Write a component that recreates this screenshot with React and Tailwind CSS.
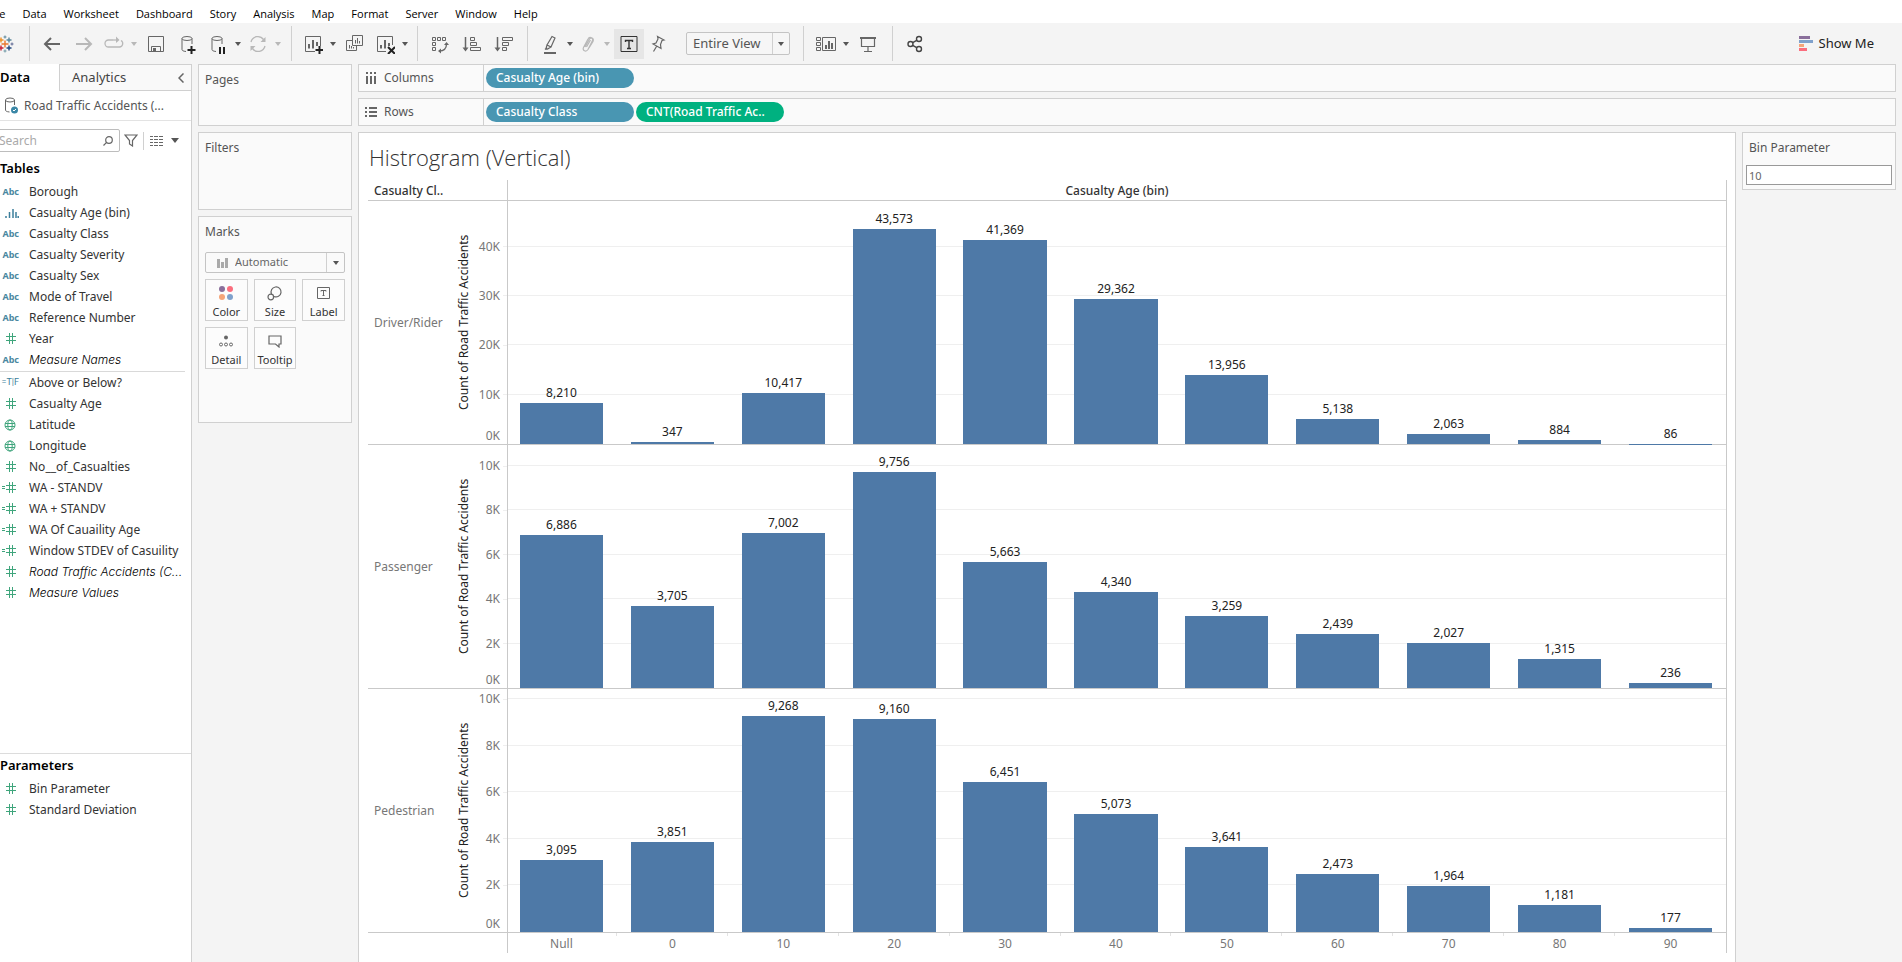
import React, { useState } from "react";

const MENUS = [
  "File",
  "Data",
  "Worksheet",
  "Dashboard",
  "Story",
  "Analysis",
  "Map",
  "Format",
  "Server",
  "Window",
  "Help",
];

const DIMENSIONS = [
  { name: "Borough", type: "abc" },
  { name: "Casualty Age (bin)", type: "bin" },
  { name: "Casualty Class", type: "abc" },
  { name: "Casualty Severity", type: "abc" },
  { name: "Casualty Sex", type: "abc" },
  { name: "Mode of Travel", type: "abc" },
  { name: "Reference Number", type: "abc" },
  { name: "Year", type: "number" },
  { name: "Measure Names", type: "abc", generated: true },
];

const MEASURES = [
  { name: "Above or Below?", type: "bool" },
  { name: "Casualty Age", type: "number" },
  { name: "Latitude", type: "geo" },
  { name: "Longitude", type: "geo" },
  { name: "No__of_Casualties", type: "number" },
  { name: "WA - STANDV", type: "calc" },
  { name: "WA + STANDV", type: "calc" },
  { name: "WA Of Cauaility Age", type: "calc" },
  { name: "Window STDEV of Casuility", type: "calc" },
  { name: "Road Traffic Accidents (C...", type: "number", generated: true },
  { name: "Measure Values", type: "number", generated: true },
];

const PARAMETERS = [
  { name: "Bin Parameter", type: "number" },
  { name: "Standard Deviation", type: "number" },
];

const BINS = ["Null", "0", "10", "20", "30", "40", "50", "60", "70", "80", "90"];

const PANES = [
  {
    name: "Driver/Rider",
    max: 49220,
    step: 10000,
    values: [8210, 347, 10417, 43573, 41369, 29362, 13956, 5138, 2063, 884, 86],
  },
  {
    name: "Passenger",
    max: 10950,
    step: 2000,
    values: [6886, 3705, 7002, 9756, 5663, 4340, 3259, 2439, 2027, 1315, 236],
  },
  {
    name: "Pedestrian",
    max: 10430,
    step: 2000,
    values: [3095, 3851, 9268, 9160, 6451, 5073, 3641, 2473, 1964, 1181, 177],
  },
];

//////////////////////////
// Icons

const Svg = ({ w = 20, h = 20, children, ...rest }) => (
  <svg
    width={w}
    height={h}
    viewBox={`0 0 ${w} ${h}`}
    fill="none"
    stroke="#666"
    aria-hidden="true"
    className="shrink-0"
    {...rest}
  >
    {children}
  </svg>
);

const LogoIcon = () => (
  <Svg strokeWidth="1.4">
    <path d="M10 6.5v7M6.5 10h7" stroke="#e8762d" />
    <path d="M14 3.5v5M11.5 6h5" stroke="#5b879b" />
    <path d="M6 3.5v5M3.5 6h5" stroke="#eb9129" />
    <path d="M14 11.5v5M11.5 14h5" stroke="#1f457e" />
    <path d="M6 11.5v5M3.5 14h5" stroke="#c72035" />
    <path d="M10 1.5v3M8.5 3h3" stroke="#5b879b" strokeWidth="1" />
    <path d="M10 15.5v3M8.5 17h3" stroke="#7099a6" strokeWidth="1" />
    <path d="M17 8.5v3M15.5 10h3" stroke="#5c6692" strokeWidth="1" />
  </Svg>
);

const BackIcon = () => (
  <Svg strokeWidth="2">
    <path d="M18 10H3M9 4l-6 6 6 6" />
  </Svg>
);

const ForwardIcon = () => (
  <Svg strokeWidth="2" stroke="#b8b8b8">
    <path d="M2 10h15M11 4l6 6-6 6" />
  </Svg>
);

const ReplayIcon = () => (
  <Svg stroke="#b8b8b8" strokeWidth="1.3">
    <path d="M9 6H4.5a3.5 3.5 0 0 0 0 7h11A3.5 3.5 0 0 0 17 6.5" />
    <path d="M9 6h4" />
    <path d="M12 2.5L15.5 6 12 9z" fill="#b8b8b8" stroke="none" />
  </Svg>
);

const SaveIcon = () => (
  <Svg>
    <path d="M2.5 2.5h15v15h-15zM5.5 17.5v-5h9v5" />
    <path d="M7 14h3v3H7z" fill="#666" stroke="none" />
  </Svg>
);

const DatabaseShape = () => (
  <>
    <ellipse cx="9" cy="4.5" rx="5" ry="2" />
    <path d="M4 4.5v11c0 1 1 1.7 4 2M14 4.5V10" />
  </>
);

const AddDataIcon = () => (
  <Svg>
    <DatabaseShape />
    <path d="M13.5 12v8M9.5 16h8" stroke="#222" strokeWidth="2" />
  </Svg>
);

const PauseDataIcon = () => (
  <Svg>
    <DatabaseShape />
    <path d="M12 13v7M16 13v7" stroke="#222" strokeWidth="2" />
  </Svg>
);

const RefreshIcon = () => (
  <Svg stroke="#b8b8b8" strokeWidth="1.3">
    <path d="M3 8a7 7 0 0 1 12.5-2.5M17 12A7 7 0 0 1 4.5 14.5" />
    <path d="M17.5 3v5h-5zM2.5 17v-5h5z" fill="#b8b8b8" stroke="none" />
  </Svg>
);

const NewSheetIcon = () => (
  <Svg>
    <path d="M12 17.5H2.5v-15h15V12" />
    <path d="M6 10v4.5M10 6v8.5M14 8v4" strokeWidth="2" />
    <path d="M16.5 12v8M12.5 16h8" stroke="#222" strokeWidth="2" />
  </Svg>
);

const DuplicateIcon = () => (
  <Svg>
    <path d="M7.5 1.5h10v10h-10zM7.5 6.5h-6v10h10v-5" />
    <path d="M10.5 6v3.5M12.5 4v5.5M14.5 7v2.5M4.5 11v3.5M6.5 12v2.5M8.5 13v1.5" />
  </Svg>
);

const ClearSheetIcon = () => (
  <Svg>
    <path d="M11 17.5H2.5v-15h15V11" />
    <path d="M6 11v3.5M10 6v8.5M14 9v3" strokeWidth="2" />
    <path d="M13 13l7 7M20 13l-7 7" stroke="#222" strokeWidth="2" />
  </Svg>
);

const SwapIcon = () => (
  <Svg>
    <path d="M2.5 3.5h3v3h-3zM7.5 3.5h3v3h-3zM12.5 3.5h3v3h-3zM2.5 8.5h3v3h-3zM2.5 13.5h3v3h-3z" />
    <path d="M9 17c5 0 7.5-3 7.5-7" strokeWidth="1.3" />
    <path d="M14 11l2.5-3 2.5 3zM11 14.5L8 17l3 2.5z" fill="#666" stroke="none" />
  </Svg>
);

const SortAscIcon = () => (
  <Svg>
    <path d="M3.5 3v12" strokeWidth="1.5" />
    <path d="M.5 13.5h6l-3 4z" fill="#666" stroke="none" />
    <path d="M8.5 3.5h4v3h-4zM8.5 8.5h6v3h-6zM8.5 13.5h10v3h-10z" />
  </Svg>
);

const SortDescIcon = () => (
  <Svg>
    <path d="M3.500 3v12" strokeWidth="1.5" />
    <path d="M.5 13.5h6l-3 4z" fill="#666" stroke="none" />
    <path d="M8.5 3.5h10v3h-10zM8.5 8.5h6v3h-6zM8.5 13.5h4v3h-4z" />
  </Svg>
);

const HighlightIcon = () => (
  <Svg>
    <path d="M12 2.5l3 1.5-4 9-4-2zM7 11l-1 3.500 1.500.5 3.500-2M5 15.500l2-2" strokeWidth="1.2" />
    <path d="M4 19h12" strokeWidth="2" />
  </Svg>
);

const ClipIcon = () => (
  <Svg stroke="#b8b8b8" strokeWidth="1.2">
    <path d="M7 13l4.500-8c1.200-2 4-.5 3 1.500L10 15.500c-2 3-6 1-4.500-2L10 5c1.500-3 6.500-1 5 2.500L11 14M8.500 13l4-7" />
  </Svg>
);

const TextIcon = () => (
  <Svg stroke="#333">
    <path d="M2 2.5h16v15H2z" />
    <path d="M6.5 8V6.5h7V8M10 6.5v8M8 14.5h4" strokeWidth="1.4" />
  </Svg>
);

const PinIcon = () => (
  <Svg strokeWidth="1.2">
    <path d="M9.5 2.500l6.500 3.500-2 .5-1.500 4 .5 4-8-4.500 3-1 2-4zM8.500 12.500L5.500 17.500" />
  </Svg>
);

const CardsIcon = () => (
  <Svg>
    <path d="M.5 3.5h4v3h-4zM.5 8.500h4v3h-4zM.5 13.500h4v3h-4zM6.5 3.5h13v13h-13z" />
    <path d="M10 11v4M13 7v8M16 9v6" strokeWidth="2" />
  </Svg>
);

const PresentIcon = () => (
  <Svg>
    <path d="M2 4h16" strokeWidth="2" />
    <path d="M3.5 5v7.500h13V5M10 12.500v5M6 17.500h8" strokeWidth="1.200" />
  </Svg>
);

const ShareIcon = () => (
  <Svg stroke="#444" strokeWidth="1.4">
    <circle cx="5.5" cy="10" r="2.5" />
    <circle cx="14" cy="5" r="2.5" />
    <circle cx="14" cy="15" r="2.5" />
    <path d="M7.7 8.7l4-2.4M7.7 11.3l4 2.4" />
  </Svg>
);

const Caret = () => (
  <Svg w={8} h={5} stroke="none" fill="#555">
    <path d="M0 0h8L4 5z" />
  </Svg>
);

const SmallCaret = ({ light }) => (
  <Svg w={6} h={4} stroke="none" fill={light ? "#b8b8b8" : "#555"}>
    <path d="M0 0h6L3 4z" />
  </Svg>
);

const FieldIcon = ({ type }) => {
  if (type === "abc")
    return <span className="text-[9px] font-bold leading-none text-[#4a87a0]">Abc</span>;
  if (type === "bool")
    return (
      <span className="font-['Roboto',sans-serif] text-[9px] leading-none text-[#3d7f9c]">=T|F</span>
    );
  if (type === "bin")
    return (
      <Svg w={14} h={10} stroke="#3d7f9c" strokeWidth="1.5">
        <path d="M1 8v2M4.5 4v6M8 1v9M11 4v6M13.2 8v2" />
      </Svg>
    );
  if (type === "geo")
    return (
      <Svg w={12} h={12} stroke="#3fa57c">
        <circle cx="6" cy="6" r="5" />
        <path d="M1 4.5h10M1 7.5h10" />
        <ellipse cx="6" cy="6" rx="2.2" ry="5" />
      </Svg>
    );
  return (
    <Svg w={16} h={11} stroke="#3fa57c">
      {type === "calc" && <path d="M2 4.5h3M2 6.5h3" />}
      <path d="M6 3.5h10M6 7.5h10M9.5 0v11M12.5 0v11" />
    </Svg>
  );
};

//////////////////////////
// Toolbar

const Tool = ({ label, width = "w-7", active, children }) => (
  <button
    type="button"
    aria-label={label}
    className={`flex h-[30px] shrink-0 items-center justify-center ${width} ${
      active ? "bg-[#e6e6e6]" : ""
    }`}
  >
    {children}
  </button>
);

const Divider = ({ margin }) => (
  <div className={`h-[35px] w-px shrink-0 bg-[#d0d0d0] ${margin}`} />
);

function Toolbar() {
  return (
    <div className="flex h-[41px] shrink-0 items-center bg-[#f4f4f4] pr-7">
      <div className="-ml-[5px]">
        <LogoIcon />
      </div>
      <Divider margin="ml-[14px] mr-[6px]" />
      <Tool label="Back" width="w-8"><BackIcon /></Tool>
      <Tool label="Forward" width="w-8"><ForwardIcon /></Tool>
      <Tool label="Replay animation"><ReplayIcon /></Tool>
      <Tool label="Replay options" width="w-3"><SmallCaret light /></Tool>
      <Tool label="Save" width="w-8"><SaveIcon /></Tool>
      <Tool label="New data source" width="w-8"><AddDataIcon /></Tool>
      <Tool label="Pause auto updates"><PauseDataIcon /></Tool>
      <Tool label="Update options" width="w-3"><SmallCaret /></Tool>
      <Tool label="Run update"><RefreshIcon /></Tool>
      <Tool label="Run update options" width="w-3"><SmallCaret light /></Tool>
      <Divider margin="mx-[7px]" />
      <Tool label="New worksheet"><NewSheetIcon /></Tool>
      <Tool label="New worksheet options" width="w-3"><SmallCaret /></Tool>
      <Tool label="Duplicate" width="w-8"><DuplicateIcon /></Tool>
      <Tool label="Clear sheet"><ClearSheetIcon /></Tool>
      <Tool label="Clear options" width="w-3"><SmallCaret /></Tool>
      <Divider margin="mx-[6px]" />
      <Tool label="Swap rows and columns" width="w-8"><SwapIcon /></Tool>
      <Tool label="Sort ascending" width="w-8"><SortAscIcon /></Tool>
      <Tool label="Sort descending" width="w-8"><SortDescIcon /></Tool>
      <Divider margin="ml-[7px] mr-2" />
      <Tool label="Highlight"><HighlightIcon /></Tool>
      <Tool label="Highlight options" width="w-3"><SmallCaret /></Tool>
      <Tool label="Group members" width="w-6"><ClipIcon /></Tool>
      <Tool label="Group options" width="w-[14px]"><SmallCaret light /></Tool>
      <Tool label="Show mark labels" width="w-[30px]" active><TextIcon /></Tool>
      <Tool label="Fix axes"><PinIcon /></Tool>
      <div className="relative ml-[14px] w-[104px] shrink-0">
        <select
          aria-label="Fit"
          className="block h-[23px] w-full appearance-none rounded-xs border border-[#c4c4c4] bg-[#f6f6f6] pl-[6px] text-[13px] text-[#555]"
        >
          <option>Entire View</option>
          <option>Standard</option>
          <option>Fit Width</option>
          <option>Fit Height</option>
        </select>
        <div className="pointer-events-none absolute inset-y-px right-px flex w-[17px] items-center justify-center border-l border-[#d0d0d0]">
          <SmallCaret />
        </div>
      </div>
      <Divider margin="ml-[13px] mr-2" />
      <Tool label="Show/hide cards"><CardsIcon /></Tool>
      <Tool label="Card options" width="w-3"><SmallCaret /></Tool>
      <Tool label="Presentation mode" width="w-8"><PresentIcon /></Tool>
      <Divider margin="mx-2" />
      <Tool label="Share"><ShareIcon /></Tool>
      <button type="button" className="ml-auto flex items-center gap-[6px] text-[13px] text-[#222]">
        <Svg w={14} h={15} stroke="none">
          <path d="M0 0h11v3H0z" fill="#8a6f9b" />
          <path d="M0 4h14v3H0z" fill="#7fa1cc" />
          <path d="M0 8h5v3H0z" fill="#f5a57a" />
          <path d="M0 12h8v3H0z" fill="#fb6e7e" />
        </Svg>
        Show Me
      </button>
    </div>
  );
}

//////////////////////////
// Data pane

const ICON_INSET = {
  abc: "",
  bin: "",
  bool: "",
  number: "pr-[3px]",
  calc: "pr-[3px]",
  geo: "pr-[3px]",
};

const FieldList = ({ fields }) => (
  <ul>
    {fields.map((field) => (
      <li key={field.name} className="flex h-[21px] items-center gap-[10px] text-xs text-[#333]">
        <span className={`flex w-[19px] shrink-0 justify-end ${ICON_INSET[field.type]}`}>
          <FieldIcon type={field.type} />
        </span>
        <span
          className={`whitespace-nowrap ${
            field.generated ? "font-['Inter',sans-serif] font-light text-black italic" : ""
          }`}
        >
          {field.name}
        </span>
      </li>
    ))}
  </ul>
);

function DataPane() {
  const [query, setQuery] = useState("");

  return (
    <aside className="flex w-48 shrink-0 flex-col overflow-hidden border-r border-[#d0d0d0] bg-white">
      <div className="flex h-[27px] shrink-0">
        <button type="button" className="w-[59px] text-left text-[13px] font-semibold text-black">
          Data
        </button>
        <div className="flex flex-1 items-center justify-between border-t border-b border-l border-[#d0d0d0] bg-[#f9f9f9] pr-[7px] pl-3">
          <button type="button" className="text-[13px] text-[#444]">
            Analytics
          </button>
          <button type="button" aria-label="Collapse pane">
            <Svg w={6} h={10} strokeWidth="1.5">
              <path d="M5.5 0.5L1 5l4.5 4.5" />
            </Svg>
          </button>
        </div>
      </div>
      <div className="flex h-[30px] shrink-0 items-center gap-1 border-b border-[#e3e3e3] text-xs text-[#555]">
        <Svg>
          <ellipse cx="10" cy="4" rx="4.5" ry="2" />
          <path d="M5.5 4v10c0 1 1 1.7 4 2M14.5 4v5" />
          <circle cx="14.5" cy="14" r="3.5" fill="#3b87a6" stroke="none" />
          <path d="M13 14l1 1 2-2" stroke="#fff" />
        </Svg>
        Road Traffic Accidents (...
      </div>
      <div className="mt-2 flex h-[23px] shrink-0 items-center">
        <div className="relative -ml-2 w-32">
          <input
            type="text"
            aria-label="Search"
            placeholder="Search"
            value={query}
            onChange={(e) => setQuery(e.target.value)}
            className="block h-[23px] w-full rounded-xs border border-[#bdbdbd] pl-[6px] text-xs placeholder:text-[#aaa]"
          />
          <div className="pointer-events-none absolute inset-y-0 right-[7px] flex items-center">
            <Svg w={10} h={10} strokeWidth="1.2">
              <circle cx="6" cy="4" r="3.3" />
              <path d="M3.6 6.4L0.5 9.5" />
            </Svg>
          </div>
        </div>
        <button type="button" aria-label="Filter fields" className="ml-1">
          <Svg w={14} h={13} strokeWidth="1.2">
            <path d="M1 1h12L8.5 6.5V12L5.5 10V6.5z" />
          </Svg>
        </button>
        <div className="ml-[5px] h-[18px] w-px bg-[#d0d0d0]" />
        <button type="button" aria-label="View options" className="ml-[6px] flex items-center gap-2">
          <Svg w={13} h={10}>
            <path
              d="M0 .5h3M0 3.5h3M0 6.5h3M0 9.5h3M4 .5h4M4 3.5h4M4 6.5h4M4 9.5h4M9 .5h4M9 3.5h4M9 6.5h4M9 9.5h4"
              strokeWidth="1.2"
            />
          </Svg>
          <Caret />
        </button>
      </div>
      <div className="flex-1">
        <h2 className="h-[29px] pt-[6px] text-[13px] leading-5 font-semibold text-black">Tables</h2>
        <FieldList fields={DIMENSIONS} />
        <hr className="mt-px mr-[6px] border-[#d9d9d9]" />
        <FieldList fields={MEASURES} />
      </div>
      <div className="h-[209px] shrink-0 border-t border-[#dcdcdc]">
        <h2 className="h-6 pt-px text-[13px] leading-5 font-semibold text-black">Parameters</h2>
        <FieldList fields={PARAMETERS} />
      </div>
    </aside>
  );
}

//////////////////////////
// Cards

const Card = ({ title, height, children }) => (
  <section className={`shrink-0 border border-[#d0d0d0] bg-[#fafafa] px-[6px] ${height}`}>
    <h3 className="text-xs leading-[30px] text-[#555]">{title}</h3>
    {children}
  </section>
);

const MarkButton = ({ label, children }) => (
  <button
    type="button"
    className="flex h-[42px] flex-col items-center justify-between border border-[#d0d0d0] bg-[#fcfcfc] pt-[5px] text-[11px] leading-4 text-[#333]"
  >
    <span className="flex h-4 items-center">{children}</span>
    {label}
  </button>
);

function CardColumn() {
  return (
    <div className="flex w-[154px] shrink-0 flex-col gap-[6px]">
      <Card title="Pages" height="h-[62px]" />
      <Card title="Filters" height="h-[78px]" />
      <Card title="Marks" height="h-[207px]">
        <div className="relative mt-[5px]">
          <select
            aria-label="Mark type"
            className="block h-[21px] w-full appearance-none rounded-xs border border-[#c4c4c4] bg-[#fafafa] pl-[29px] text-[11px] text-[#666]"
          >
            <option>Automatic</option>
            <option>Bar</option>
            <option>Line</option>
          </select>
          <div className="pointer-events-none absolute inset-y-0 left-3 flex items-center">
            <Svg w={11} h={10} stroke="none" fill="#aaa">
              <path d="M0 1h3v9H0zM4 4h3v6H4zM8 0h3v10H8z" />
            </Svg>
          </div>
          <div className="pointer-events-none absolute inset-y-px right-px flex w-[18px] items-center justify-center border-l border-[#d0d0d0]">
            <SmallCaret />
          </div>
        </div>
        <div className="mt-[6px] grid grid-cols-3 gap-[6px]">
          <MarkButton label="Color">
            <Svg w={14} h={14} stroke="none">
              <circle cx="3" cy="3" r="3" fill="#8a6f9b" />
              <circle cx="11" cy="3" r="3" fill="#fb6e7e" />
              <circle cx="3" cy="11" r="3" fill="#f5a57a" />
              <circle cx="11" cy="11" r="3" fill="#7fa1cc" />
            </Svg>
          </MarkButton>
          <MarkButton label="Size">
            <Svg w={15} h={15} strokeWidth="1.2">
              <path d="M4.5 8A5 5 0 1 1 7 10.5" />
              <circle cx="3.8" cy="11" r="2.8" />
            </Svg>
          </MarkButton>
          <MarkButton label="Label">
            <Svg w={13} h={12}>
              <path d="M.5.5h12v11H.5zM4 4.5v-1h5v1M6.5 3.5v5M5.5 8.5h2" />
            </Svg>
          </MarkButton>
          <MarkButton label="Detail">
            <Svg w={14} h={12}>
              <circle cx="7" cy="2.5" r="2" fill="#666" stroke="none" />
              <circle cx="2" cy="9.5" r="1.5" />
              <circle cx="7" cy="9.5" r="1.5" />
              <circle cx="12" cy="9.5" r="1.5" />
            </Svg>
          </MarkButton>
          <MarkButton label="Tooltip">
            <Svg w={14} h={13} strokeWidth="1.2">
              <path d="M1 1h12v8h-2v3L7.5 9H1z" />
            </Svg>
          </MarkButton>
        </div>
      </Card>
    </div>
  );
}

//////////////////////////
// Shelves

const Shelf = ({ title, icon, children }) => (
  <div className="flex h-7 shrink-0 border border-[#d0d0d0] bg-[#fafafa]">
    <div className="flex w-[125px] shrink-0 items-center gap-[7px] border-r border-[#d0d0d0] pl-[6px] text-xs text-[#555]">
      {icon}
      {title}
    </div>
    <div className="flex items-center gap-[2px] pl-[2px]">{children}</div>
  </div>
);

const Pill = ({ color, children }) => (
  <button
    type="button"
    className={`h-5 w-[148px] rounded-full pl-[10px] text-left text-xs font-medium text-white ${color}`}
  >
    {children}
  </button>
);

//////////////////////////
// Chart

const ticksOf = (pane) => {
  const ticks = [];
  for (let t = 0; t <= pane.max; t += pane.step) ticks.push(t);
  return ticks;
};

const Pane = ({ pane }) => (
  <div className="flex min-h-0 flex-1 border-b border-[#c9c9c9]">
    <div className="flex w-[140px] shrink-0 border-r border-[#c9c9c9]">
      <div className="flex w-[86px] items-center pt-px pl-[6px] text-xs text-[#777]">{pane.name}</div>
      <div className="flex w-5 rotate-180 items-center justify-center text-xs leading-5 whitespace-nowrap text-[#222] [writing-mode:vertical-rl]">
        Count of Road Traffic Accidents
      </div>
      <div className="relative flex-1">
        {ticksOf(pane).map((tick) => (
          <div
            key={tick}
            className={`absolute right-0 flex h-4 items-center gap-[3px] text-xs text-[#777] ${
              tick ? "translate-y-1/2" : "pr-[7px]"
            }`}
            style={{ bottom: `${(tick / pane.max) * 100}%` }}
          >
            {tick / 1000}K
            {tick > 0 && <span className="h-px w-1 bg-[#efefef]" />}
          </div>
        ))}
      </div>
    </div>
    <div className="relative flex-1 border-r border-[#c9c9c9]">
      {ticksOf(pane)
        .slice(1)
        .map((tick) => (
          <div
            key={tick}
            className="absolute inset-x-0 h-px bg-[#efefef]"
            style={{ bottom: `${(tick / pane.max) * 100}%` }}
          />
        ))}
      <div className="relative -ml-[2px] flex h-full">
        {pane.values.map((value, i) => (
          <div key={BINS[i]} className="flex min-w-0 flex-1 flex-col items-center justify-end">
            <div className="mb-[2px] text-xs leading-4 text-[#222]">{value.toLocaleString("en-US")}</div>
            <div
              className="w-3/4 shrink-0 bg-[#4e79a7]"
              style={{ height: `${(value / pane.max) * 100}%` }}
            />
          </div>
        ))}
      </div>
    </div>
  </div>
);

function Chart() {
  return (
    <main className="flex min-w-0 flex-1 flex-col border border-b-0 border-[#d0d0d0] bg-white pr-2 pb-[9px] pl-[9px]">
      <h1 className="h-[47px] shrink-0 pt-2 pl-px font-['Open_Sans',sans-serif] text-[22px] leading-8 font-light text-[#333]">
        Histrogram (Vertical)
      </h1>
      <div className="flex h-[21px] shrink-0 border-b border-[#c9c9c9] text-xs leading-5 font-medium text-[#333]">
        <div className="w-[140px] shrink-0 border-r border-[#c9c9c9] pt-px pl-[6px]">Casualty Cl..</div>
        <div className="flex-1 border-r border-[#c9c9c9] pt-px text-center">Casualty Age (bin)</div>
      </div>
      {PANES.map((pane) => (
        <Pane key={pane.name} pane={pane} />
      ))}
      <div className="flex h-5 shrink-0">
        <div className="w-[140px] shrink-0 border-r border-[#c9c9c9]" />
        <div className="flex-1 border-r border-[#c9c9c9]">
          <div className="-ml-[2px] flex">
            {BINS.map((bin, i) => (
              <div key={bin} className="flex min-w-0 flex-1 text-xs leading-5 text-[#777]">
                <span className="flex-1 pt-px text-center">{bin}</span>
                {i < BINS.length - 1 && <span className="-ml-px h-[3px] w-px bg-[#e3e3e3]" />}
              </div>
            ))}
          </div>
        </div>
      </div>
    </main>
  );
}

export default function App() {
  const [binSize, setBinSize] = useState("10");

  return (
    <div className="flex h-screen min-h-[640px] flex-col overflow-hidden bg-[#f4f4f4] font-['Noto_Sans',sans-serif]">
      <nav className="flex h-[23px] shrink-0 items-center bg-white pt-[5px] font-['Open_Sans',sans-serif] text-[11px] text-black">
        <ul className="-ml-3 flex gap-[17px]">
          {MENUS.map((menu) => (
            <li key={menu}>
              <button type="button">{menu}</button>
            </li>
          ))}
        </ul>
      </nav>
      <Toolbar />
      <div className="flex min-h-0 flex-1 gap-[6px] pr-[6px]">
        <DataPane />
        <CardColumn />
        <div className="flex min-w-0 flex-1 flex-col gap-[6px]">
          <Shelf
            title="Columns"
            icon={
              <Svg w={12} h={12} strokeWidth="2">
                <path d="M2 0v2M2 4v8M6 0v2M6 4v8M10 0v2M10 4v8" />
              </Svg>
            }
          >
            <Pill color="bg-[#4996b2]">Casualty Age (bin)</Pill>
          </Shelf>
          <Shelf
            title="Rows"
            icon={
              <Svg w={12} h={12} strokeWidth="2">
                <path d="M0 2h2M4 2h8M0 6h2M4 6h8M0 10h2M4 10h8" />
              </Svg>
            }
          >
            <Pill color="bg-[#4996b2]">Casualty Class</Pill>
            <Pill color="bg-[#00b180]">CNT(Road Traffic Ac..</Pill>
          </Shelf>
          <div className="flex min-h-0 flex-1 gap-[6px]">
            <Chart />
            <aside className="h-[58px] w-[154px] shrink-0 border border-[#d0d0d0] bg-[#fafafa] px-[3px]">
              <label htmlFor="binParameter" className="block h-8 pl-[3px] text-xs leading-[30px] text-[#555]">
                Bin Parameter
              </label>
              <input
                id="binParameter"
                type="text"
                value={binSize}
                onChange={(e) => setBinSize(e.target.value)}
                className="block h-5 w-full border border-[#999] bg-white pl-[2px] text-[11px] text-[#666]"
              />
            </aside>
          </div>
        </div>
      </div>
    </div>
  );
}
